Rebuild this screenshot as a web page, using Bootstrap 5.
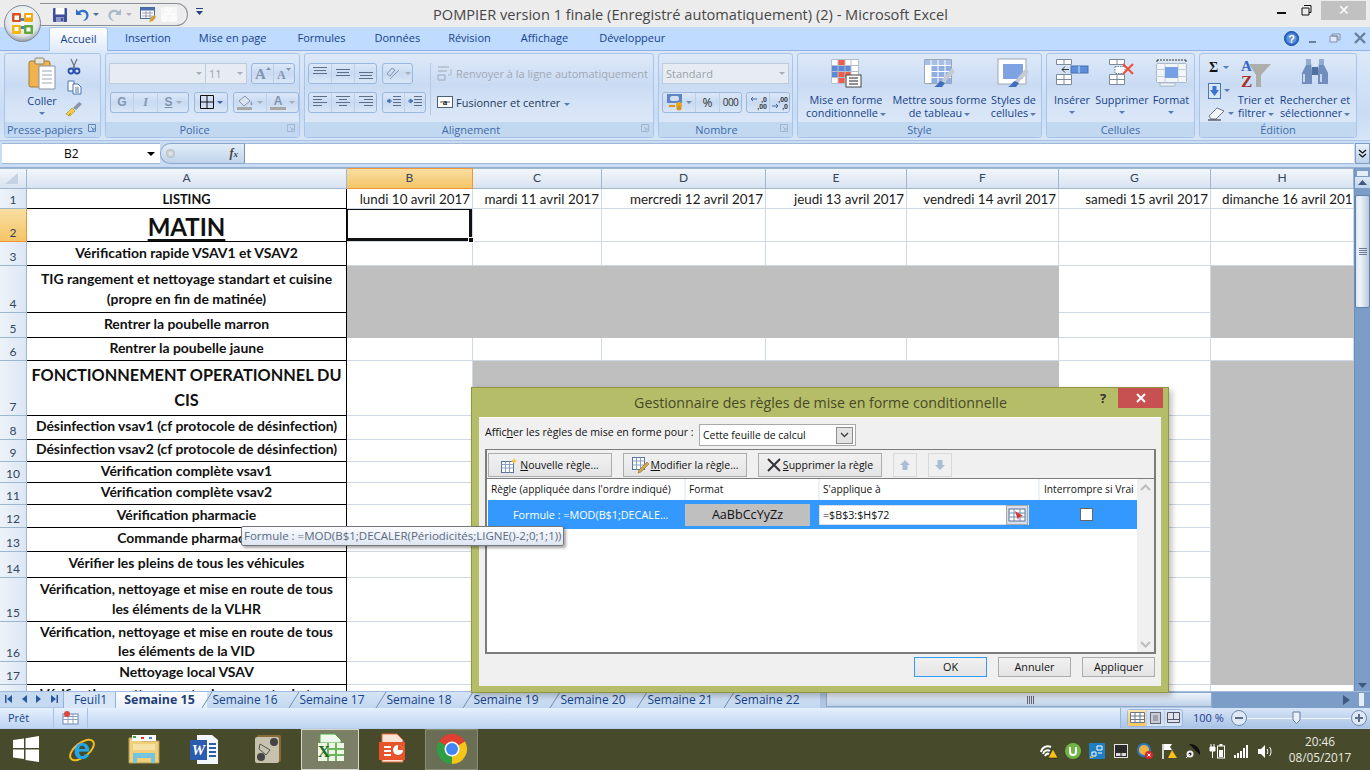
<!DOCTYPE html>
<html lang="fr">
<head>
<meta charset="utf-8">
<title>POMPIER version 1 finale - Microsoft Excel</title>
<link href="https://cdn.jsdelivr.net/npm/bootstrap@5.3.0/dist/css/bootstrap.min.css" rel="stylesheet">
<style>
html,body{height:770px;overflow:hidden;background:#fff}
body{font:11px "Open Sans",sans-serif;color:#15428b;line-height:13px}
svg{display:block;flex:none;overflow:visible}
.x-app{position:relative;width:1370px;height:770px;overflow:hidden}
/* title */
.x-title{height:27px;background:#ececec;position:relative}
.x-orbwrap{width:42px;flex:none;position:relative;z-index:3}
.x-orb{position:absolute;left:4px;top:5px}
.x-qat{height:23px;width:148px;margin-top:3px;margin-left:-2px;border:1px solid #8a8f98;border-left:0;border-radius:0 12px 12px 0;background:#ececec;padding-left:13px;gap:0}
.x-qm8{margin-left:8px}.x-qm4{margin-left:4px}.x-qm6{margin-left:7px}
.x-titletext{position:absolute;left:433px;top:5px;font-size:14.6px;line-height:18px;color:#474747;white-space:nowrap}
.x-winbtn{position:absolute;top:1px;height:19px}
.x-wmin{left:1276px}.x-wmax{left:1301px}
.x-wclose{left:1321px;width:45px;background:#c1c1c1;color:#fff;text-align:center;font-size:14px;line-height:18px}
/* tabs */
.x-tabbar{height:24px;background:#bfdbff;position:relative;padding-left:49px;border-bottom:1px solid #8db2e3}
.x-rtab{height:24px;color:#15428b;font-size:11px;line-height:22px;white-space:nowrap}
.x-rtab-on{background:linear-gradient(#fff,#dfeafa);border:1px solid #a3c3eb;border-bottom:0;border-radius:3px 3px 0 0;color:#15428b;width:59px;text-align:center;position:relative;margin-bottom:-1px;height:24px}
.x-tm17{margin-left:17px}.x-tm28{margin-left:28px}.x-tm29{margin-left:29px}.x-tm30{margin-left:30px}.x-tm31{margin-left:31px}
.x-winmini{gap:9px;padding-right:4px;height:23px}
.x-xgap{margin-left:4px}
/* ribbon */
.x-ribbon{height:90px;background:linear-gradient(#dbe8f9,#c9dcf5 70%,#d6e5f7);padding:2px 0 0 4px;border-bottom:1px solid #a9c3e6;gap:4px}
.x-grp{height:85px;border:1px solid #a8c4e8;border-radius:3px;background:linear-gradient(#dde9f8,#c9dbf3 38%,#d5e3f6 60%,#dfeafa);position:relative;display:flex;flex-direction:column}
.x-body{height:68px;flex:none;display:flex}
.x-bp3{padding-left:3px}.x-bt5{padding-top:3px}
.x-cap{height:15px;background:#c2d8f1;text-align:center;color:#3e6aaa;font-size:11px;line-height:15px;border-radius:0 0 3px 3px;position:relative}
.x-capl{text-align:left;padding-left:2px}.x-cap16{padding-right:16px}.x-cap18{padding-right:18px}
.x-launch{position:absolute;right:3px;top:2px;width:9px;height:9px}
.x-g1{width:97px}.x-g2{width:195px}.x-g3{width:350px}.x-g4{width:135px}.x-g5{width:245px}.x-g6{width:149px}.x-g7{width:158px}
.x-big{display:flex;flex-direction:column;align-items:center;text-align:center;white-space:nowrap;color:#15428b;font-size:10.85px;line-height:13px;flex:none}
.x-bigicon{height:36px;padding-top:2px;display:flex;justify-content:center;align-items:flex-start}
.x-pastew{width:58px;padding-left:16px}
.x-pasteicon{height:40px;padding-top:4px}
.x-m{height:9px;line-height:9px}
.x-st1w{width:93px;padding-top:3px;padding-left:3px}.x-st2w{width:95px;padding-top:3px;padding-left:2px}.x-st3w{width:55px;padding-top:3px}
.x-cw1{width:50px}.x-cw2{width:50px}.x-cw3{width:48px}
.x-ew1{width:34px;padding:7px 0 0 8px;gap:8px}.x-ew2{width:44px;padding-top:3px}.x-ew3{width:74px;padding-top:3px}
.x-sm1{height:14px;gap:5px;font:700 14px/14px 'Liberation Serif',serif;color:#111;padding-left:1px}
.x-sm2{height:16px;gap:3px}.x-sm3{height:14px;gap:2px}
.x-smc{width:22px;padding-top:5px;gap:6px}
.x-tri{display:inline-block;width:0;height:0;border:3px solid transparent;border-top:3px solid #567db1;border-bottom:0;vertical-align:middle;margin-left:2px}
.x-tri0{margin:0}.x-tridk{border-top-color:#3d62a8;margin:0}.x-trinum{border-top-color:#6e8db6;margin:0}
.x-col{display:flex;flex-direction:column}
.x-rows{display:flex;flex-direction:column;gap:8px;padding-top:9px}
.x-row{display:flex;height:21px;gap:5px}
.x-r0{gap:0}.x-r4{gap:4px}.x-r3t{gap:3px;color:#a0a8b3}.x-r3f{gap:3px;color:#1e395b}
.x-bg{display:flex;align-items:center;border:1px solid #9ab8de;border-radius:3px;background:linear-gradient(#dce8f8,#c8daf2 50%,#d9e6f7);height:21px;flex:none}
.x-b{height:100%;display:flex;align-items:center;justify-content:center;border-right:1px solid #bdd0e9;gap:3px;flex:none}
.x-b:last-child{border-right:0;flex:1}
.x-combo{height:21px;background:#e7ecf2;border:1px solid #bccbdd;color:#9aa3ad;display:flex;align-items:center;justify-content:space-between;padding:0 3px;font-size:11px;flex:none}
.x-tg{display:inline-block;width:0;height:0;border:3px solid transparent;border-top:3px solid #a5afba;border-bottom:0}
.w19{width:19px}.w18{width:18px}.w21{width:21px}.w22{width:22px}.w23{width:23px}.w24{width:24px}.w33{width:33px}.w31{width:31px}.w34{width:34px}.w42{width:42px}.w44{width:44px}.w56{width:56px}.w66{width:66px}.w69{width:69px}.w79{width:79px}.w80{width:80px}.w97{width:97px}.w127{width:127px}.w118{width:118px}
.x-fend{justify-content:flex-end}
.x-ml1n{margin-left:-1px}.x-ml1{margin-left:1px}.x-ml4{margin-left:4px}
.x-bi{color:#8296b0;font:700 12px 'Liberation Sans',sans-serif}
.x-bii{color:#8296b0;font:italic 700 12px 'Liberation Serif',serif}
.x-vsep{width:1px;height:52px;background:#b4c9e4;margin:9px 6px 0 4px;flex:none}
.x-rt{white-space:nowrap;font-size:11px;padding-top:1px}
.x-pct{color:#333;font-size:12px}.x-mil{color:#333;font-size:10px;letter-spacing:-.5px}
/* formula */
.x-fbar{height:27px;background:#c9dcf3;padding:2px 0 4px 2px;border-bottom:1px solid #93b0d2;position:relative}
.x-name{width:158px;height:21px;background:#fff;position:relative;font-size:12px;line-height:20px;color:#000;padding-left:62px;border-top:1px solid #9fb8d6;border-bottom:1px solid #9fb8d6}
.x-name i{position:absolute;right:5px;top:8px;border:4px solid transparent;border-top:4px solid #000;border-bottom:0}
.x-pill{width:85px;height:21px;border:1px solid #8aa7cc;border-right:1px solid #6f92bf;border-radius:10px 0 0 10px;background:linear-gradient(#e3edf9,#c0d3ea);position:relative;font:italic bold 12px "Liberation Serif",serif;color:#444;text-align:right;padding-right:6px;line-height:19px}
.x-pill b{position:absolute;left:5px;top:5px;width:9px;height:9px;border-radius:50%;background:radial-gradient(#eee,#9aa)}
.x-pill span{font-size:9px}
.x-input{flex:1;height:21px;background:#fff;border-top:1px solid #9fb8d6;border-bottom:1px solid #9fb8d6}
.x-expand{width:15px;height:21px;margin-left:1px;background:linear-gradient(#e8f0fb,#bdd1ea);border:1px solid #7d9cc4;display:flex;align-items:center;justify-content:center}
/* sheet */
.x-sheet{height:524px;position:relative;overflow:hidden;background:#fff}
.x-grid{border-collapse:separate;border-spacing:0;table-layout:fixed;width:1354px;font:13.95px Lato,sans-serif;color:#000;flex:none}
.x-grid td,.x-grid th{padding:0;border-right:1px solid #d0d7e5;border-bottom:1px solid #d0d7e5;overflow:hidden;white-space:nowrap;font-weight:400}
.x-grid thead th{height:21px;background:linear-gradient(#f2f6fb,#d8e3f1);border-color:#9eb6ce;border-top:1px solid #9eb6ce;text-align:center;color:#33465c;font-size:12px;line-height:18px}
.x-grid thead th.x-hon{background:linear-gradient(#f9dea2,#f4c566);border-color:#f29536}
.x-grid tbody th{background:linear-gradient(90deg,#eef3fa,#dce6f3);border-color:#9eb6ce;text-align:center;color:#33465c;font-size:12px;vertical-align:bottom;line-height:17px}
.x-grid tbody th.x-hon{background:linear-gradient(#f9dea2,#f4c566);border-color:#f29536}
.x-grid td.x-a{border-right:1px solid #000;border-bottom:1px solid #000;text-align:center;font-weight:700;white-space:nowrap;line-height:18px;color:#111;padding-bottom:2px}
.x-grid tr.x-hr2 td.x-a,.x-grid tr.x-hr3 td.x-a,.x-grid tr.x-hr4 td.x-a,.x-grid tr.x-hr7 td.x-a,.x-grid tr.x-hr15 td.x-a,.x-grid tr.x-hr16 td.x-a,.x-grid td.x-list{padding-bottom:0;line-height:20px}
.x-grid tr.x-hr16 td.x-a{line-height:19.5px}
.x-grid td.x-list{font-size:12.8px;line-height:18px;vertical-align:bottom}
.x-grid tr.x-hr18 td.x-a{padding-bottom:0}
.x-grid td.x-gray{background:#bfbfbf;border-color:#bfbfbf}
.x-grid td.x-d{text-align:right;padding-right:2px;font-size:13.4px;line-height:18px;color:#1a1a1a;vertical-align:bottom}
.x-grid td.x-dl{text-align:left;padding-left:11px}
.x-matin{font-size:24px;line-height:28px;text-decoration:underline;text-underline-offset:3px;display:block;padding-top:4px}
.x-fonc{font-size:16.3px;line-height:24.5px;display:block}
.x-grid td.x-active{position:relative;overflow:visible;box-shadow:inset -3px -3px 0 #111,inset 1px 1px 0 #111}
.x-handle{position:absolute;right:-2px;bottom:-2px;width:6px;height:6px;background:#111;border:1px solid #fff}
.x-hr1{height:20px}.x-hr2{height:33px}.x-hr3{height:24px}.x-hr4{height:47px}.x-hr5{height:25px}.x-hr6{height:23px}.x-hr7{height:55px}.x-hr8{height:24px}.x-hr9{height:22px}.x-hr10{height:21px}.x-hr11{height:22px}.x-hr12{height:23px}.x-hr13{height:24px}.x-hr14{height:26px}.x-hr15{height:44px}.x-hr16{height:40px}.x-hr17{height:23px}.x-hr18{height:24px}
.x-grid td.x-top{vertical-align:top}
.x-clip18{display:block;height:6px;overflow:hidden;margin-top:2px;line-height:14px}
.x-c0{width:27px}.x-cA{width:320px}.x-cB{width:126px}.x-cC{width:129px}.x-cD{width:164px}.x-cE{width:141px}.x-cF{width:152px}.x-cG{width:152px}.x-cH{width:143px}
.x-vscroll{width:16px;height:524px;background:#7c9dc8;border-left:1px solid #6d8fbc;flex:none}
.x-vsplit{height:7px;margin:2px 1px 0;background:#e4edf8;border:1px solid #7c9dc8}
.x-arrowb{height:11px;display:flex;align-items:center;justify-content:center;background:linear-gradient(#dfe9f6,#c0d3ea)}
.x-arrowd{margin-top:372px;background:#7c9dc8}
.x-thumb{height:113px;margin-top:7px;background:linear-gradient(90deg,#dde7f3,#f1f5fb 30%,#b9c9dd);border:1px solid #5f82ae;border-radius:2px;display:flex;align-items:center;justify-content:center}
/* bottom */
.x-sheettabs{height:17px;background:#afc6e3;position:relative;border-top:1px solid #a1bbdd;font-size:12px;color:#15428b;line-height:15px}
.x-nav{width:63px;padding-left:5px;gap:9px;display:flex;align-items:center;height:15px;background:#c5d9f1;flex:none}
.x-stab{height:16px;position:relative;text-align:center;background:linear-gradient(#d6e5f6,#c1d6ef);flex:none;white-space:nowrap}
.x-stab svg{position:absolute;left:-5px;top:0}
.x-st1{width:53px;border-left:1px solid #8db2e3;border-right:1px solid #8db2e3;background:#d8e6f6;padding-left:2px}
.x-st2{width:91px;font-weight:700;background:linear-gradient(#fff,#e8f0fb);color:#1f3f78;font-size:12.4px;padding-right:4px}
.x-stn{width:87px;padding-right:11px}
.x-stend{width:4px}
.x-hs{width:386px;height:15px;background:linear-gradient(#edf3fb,#bed0e6);margin-left:6px;border:1px solid #8fa9cb;flex:none;position:relative}
.x-hs i{position:absolute;left:200px;top:3px;width:8px;height:8px;background:repeating-linear-gradient(90deg,#667 0 1px,transparent 1px 2px)}
.x-ht{flex:1;height:16px;background:#7c9dc8;display:flex;align-items:center;gap:5px;padding-left:131px}
.x-hh{width:5px;height:13px;background:#e4edf8;margin-left:4px}
.x-status{height:21px;background:linear-gradient(#e5f0fd,#d3e3f8 45%,#bfd5f1);border-bottom:1px solid #b4cce9;color:#15428b;font-size:11px;line-height:19px;position:relative}
.x-sb{border-right:1px solid #a7c1e2;height:20px;flex:none}
.x-sb1{width:54px;padding-left:8px}
.x-view{margin-left:auto;width:250px;height:20px;background:linear-gradient(#d7e5f7,#a9c3e6);display:flex;align-items:center;padding-left:6px;border-left:1px solid #96b3d8;font-size:11px;color:#1f3a8c}
.x-bg18{height:18px}
.x-von{background:linear-gradient(#fbe6b1,#f8c760)}
.x-pct100{margin-left:10px;width:29px;white-space:nowrap}
.x-zm{margin-left:9px}
.x-task{height:41px;background:#474b2b;position:relative}
.x-win{width:52px;flex:none}
.x-tk{height:41px;display:flex;align-items:center;justify-content:center;flex:none}
.x-k60{width:60px}.x-k64{width:64px}.x-k58{width:58px}.x-k67{width:67px}.x-k66{width:66px}.x-k53{width:53px}
.x-tkon{background:#7b7f66;border:1px solid #d6d8cc}
.x-tk2{background:#6a6e55;border:1px solid #888b75}
.x-tray{margin-left:auto;padding-right:10px;height:41px;display:flex;align-items:center;color:#fff}
.x-ti{width:24px;display:flex;justify-content:center;flex:none;position:relative;top:2px}
.x-clock{width:80px;text-align:center;font-size:11.8px;line-height:16px;color:#e9e9e1;margin-left:3px}
/* dialog */
.x-dlg{position:absolute;z-index:2;left:471px;top:387px;width:698px;height:306px;background:#b5bd68;border:1px solid #90963f;box-shadow:3px 3px 6px rgba(0,0,0,.25);font-size:10.5px;color:#111;line-height:14px}
.x-dt{height:29px;text-align:center;font-size:14.2px;line-height:30px;color:#474a28;padding-left:1px}
.x-dq{position:absolute;left:628px;top:2px;font:700 13px/16px "Open Sans",sans-serif;color:#333}
.x-dx{position:absolute;left:646px;top:0;width:45px;height:20px;background:#c75050;display:flex;align-items:center;justify-content:center}
.x-dbody{margin:0 7px 0 7px;height:269px;background:#f0f0f0;border-top:1px solid #fff;padding:0 6px 0 6px}
.x-dtop{height:31px;display:flex;padding-top:6px}
.x-dlabel{width:214px;line-height:15px;flex:none;font-size:10.6px;padding-top:1px}
.x-dsel{width:157px;height:22px;background:#fff;border:1px solid #a9a9a9;padding:0 2px 0 3px;display:flex;align-items:center;justify-content:space-between;font-size:10.4px}
.x-dsel b{width:17px;height:17px;background:#e3e3e3;border:1px solid #8d8d8d;display:flex;align-items:center;justify-content:center}
.x-panel{height:205px;border:2px solid #7c7c7c;border-top-width:1px;background:#fff;width:671px}
.x-ptools{height:29px;background:#f0f0f0;border-bottom:1px solid #7c7c7c;padding:3px 0 0 1px;display:flex;gap:11px}
.x-dbtn{height:24px;width:124px;border:1px solid #acacac;background:linear-gradient(#f1f1f1,#e4e4e4);display:flex;align-items:center;justify-content:center;gap:2px;font-size:10.5px;white-space:nowrap;color:#111;padding:0}
.x-dis{width:24px;background:#f0f0f0;border-color:#d9d9d9}
.x-phead{height:21px;display:flex;align-items:center;padding-left:1px}
.x-phead div{height:21px;line-height:21px;padding-left:3px;border-right:2px solid #edf2f9;flex:none;font-size:10.2px;white-space:nowrap;overflow:hidden}
.x-c1{width:198px}.x-c2{width:134px}.x-c3{width:220px}.x-phead .x-c4{width:97px;border-right:0;padding-left:4px}
.x-prow{height:29px;width:649px;background:#3399ff;display:flex;align-items:center;margin-left:1px;color:#fff;position:relative}
.x-pf{padding-left:25px;white-space:nowrap;font-size:10.8px;width:197px;flex:none}
.x-pscroll{position:absolute;left:650px;top:0;width:17px;height:173px;background:#f0f0f0;padding:5px 0 4px}
.x-plist{position:relative}
.x-fmt{height:22px;background:#bfbfbf;width:125px;flex:none;color:#111;text-align:center;line-height:22px;font-size:12.6px}
.x-ref{width:210px;height:20px;margin-left:9px;background:#fff;border:1px solid #dde;color:#111;position:relative;display:flex;align-items:center;padding-left:3px;font-size:10.7px;flex:none}
.x-ref b{position:absolute;right:0;top:-1px;width:22px;height:20px;background:#d9dfe8;border:1px solid #a8a8a8;display:flex;align-items:center;justify-content:center}
.x-chk{width:13px;height:13px;background:#fff;border:1px solid #666;margin-left:51px;flex:none}
.x-dfoot{display:flex;justify-content:flex-end;gap:11px;padding-top:3px;width:670px}
.x-fbtn{width:73px;height:20px;border:1px solid #acacac;background:linear-gradient(#f1f1f1,#e4e4e4);text-align:center;line-height:18px;font-size:10.8px;color:#111}
.x-fok{border-color:#3399ff}
u{text-underline-offset:1px}
/* tooltip */
.x-tip{position:absolute;z-index:3;left:241px;top:526px;width:323px;height:20px;background:linear-gradient(#fbfcfe,#dfe6f3);border:1px solid #76767b;border-radius:2px;box-shadow:2px 2px 3px rgba(0,0,0,.35);color:#5a6a80;font-size:11.5px;line-height:18px;padding-left:2px;white-space:nowrap}
</style>
</head>
<body>
<div class="x-app d-flex flex-column">

<!-- title bar -->
<div class="x-title d-flex">
  <div class="x-orbwrap">
    <svg class="x-orb" width="37" height="37" viewBox="0 0 37 37">
      <defs><radialGradient id="og" cx=".5" cy=".35" r=".7"><stop offset="0" stop-color="#fff"/><stop offset=".7" stop-color="#dfe4ea"/><stop offset="1" stop-color="#7b8794"/></radialGradient></defs>
      <circle cx="18.5" cy="18.5" r="18" fill="url(#og)" stroke="#7f8b99"/>
      <rect x="8" y="8" width="9" height="9" rx="1" fill="#d9531e"/><rect x="10.5" y="10.5" width="4.5" height="4.5" fill="#fff"/>
      <rect x="20" y="8" width="9" height="9" rx="1" fill="#f3a712"/><rect x="22" y="10" width="5" height="2.5" fill="#fff"/>
      <rect x="8" y="20" width="9" height="9" rx="1" fill="#f2b705"/><rect x="10.5" y="22" width="4" height="4" fill="#fff"/>
      <rect x="20" y="20" width="9" height="9" rx="1" fill="#5fa83a"/><rect x="22.5" y="22.5" width="4" height="4" fill="#fff"/>
      <rect x="17" y="13" width="3" height="3" fill="#3a86c8"/><rect x="17" y="21" width="3" height="3" fill="#3a86c8"/>
    </svg>
  </div>
  <div class="x-qat d-flex align-items-center">
    <svg width="14" height="14" viewBox="0 0 14 14"><rect width="14" height="14" rx="1" fill="#3d4f9c"/><rect x="2.5" y="0" width="9" height="6.5" fill="#fff"/><rect x="3" y="9" width="8" height="5" fill="#8d98c9"/><rect x="8" y="10" width="2" height="3" fill="#3d4f9c"/></svg>
    <svg class="x-qm8" width="14" height="14" viewBox="0 0 14 14"><path d="M1 1v6h6L5 5c2-2 5-1 6 1s0 5-3 7c4-.5 6-3.500 5.500-6.500C13 2.500 7.500 0 3.500 3.500z" fill="#2f6fc6"/></svg>
    <svg class="x-qm4" width="7" height="4" viewBox="0 0 7 4"><path d="M0 0h6L3 3z" fill="#4a6a9c"/></svg>
    <svg class="x-qm8" width="14" height="14" viewBox="0 0 14 14"><path d="M13 1v6H7l2-2C7 3 4 4 3 6s0 5 3 7C2 12.500 0 9.500.5 6.500 1 2.500 6.500 0 10.500 3.500z" fill="#a9b8ca"/></svg>
    <svg class="x-qm4" width="7" height="4" viewBox="0 0 7 4"><path d="M0 0h6L3 3z" fill="#a9b3bf"/></svg>
    <svg class="x-qm6" width="17" height="16" viewBox="0 0 17 16"><rect x=".5" y=".5" width="14" height="11" fill="#fff" stroke="#47689a"/><rect x="1" y="1" width="13" height="2.500" fill="#4a6fb0"/><path d="M2 6h11M2 9h11M6 4v7M10 4v7" stroke="#88a" stroke-width=".8"/><path d="M9 15l2-5 4-2 1 2-3 4z" fill="#d2a13a"/></svg>
    <svg class="x-qm4" width="16" height="15" viewBox="0 0 16 15"><rect width="16" height="15" fill="#f7f7f7"/><path d="M6 1h4v3H6zM1 10h4v3H1zM11 10h4v3h-4zM8 4v3M3 10V7h10v3" fill="none" stroke="#fff"/></svg>
  </div>
  <svg class="ms-2 mt-2" width="7" height="8" viewBox="0 0 7 8"><path d="M0 0h7v1H0zM0 3h7L3.500 7z" fill="#27457c"/></svg>
  <div class="x-titletext">POMPIER version 1 finale (Enregistré automatiquement) (2) - Microsoft Excel</div>
  <svg class="x-winbtn x-wmin" width="12" height="19" viewBox="0 0 12 19"><rect x="1" y="11" width="9" height="2" fill="#111"/></svg>
  <svg class="x-winbtn x-wmax" width="12" height="19" viewBox="0 0 12 19"><path d="M3 4.500h7v7h-2M1 7h7v7H1z" fill="none" stroke="#111"/></svg>
  <div class="x-winbtn x-wclose">✕</div>
</div>

<!-- ribbon tabs -->
<div class="x-tabbar d-flex">
  <div class="x-rtab x-rtab-on">Accueil</div>
  <div class="x-rtab x-tm17">Insertion</div>
  <div class="x-rtab x-tm28">Mise en page</div>
  <div class="x-rtab x-tm31">Formules</div>
  <div class="x-rtab x-tm29">Données</div>
  <div class="x-rtab x-tm28">Révision</div>
  <div class="x-rtab x-tm30">Affichage</div>
  <div class="x-rtab x-tm31">Développeur</div>
  <div class="ms-auto d-flex align-items-center x-winmini">
    <svg width="15" height="15" viewBox="0 0 15 15"><circle cx="7.500" cy="7.500" r="7" fill="#2e6fd0" stroke="#17479a"/><circle cx="7.500" cy="7.500" r="5" fill="#fff" opacity=".25"/><text x="7.500" y="11.500" font-family="Liberation Sans" font-size="11" font-weight="700" text-anchor="middle" fill="#fff">?</text></svg>
    <svg width="12" height="12" viewBox="0 0 12 12"><rect x="1" y="9" width="7" height="2" fill="#6b7f9b"/></svg>
    <svg width="12" height="12" viewBox="0 0 12 12"><path d="M3 2h8v6H9V4H3zM1 4h7v6H1z" fill="#dfe8f4" stroke="#6b7f9b" stroke-width=".8"/></svg>
    <svg class="x-xgap" width="12" height="12" viewBox="0 0 12 12"><path d="M1 1l10 10M11 1L1 11" stroke="#6b7f9b" stroke-width="2.400"/></svg>
  </div>
</div>

<!-- ribbon -->
<div class="x-ribbon d-flex">
  <!-- Presse-papiers -->
  <div class="x-grp x-g1">
    <div class="x-body">
      <div class="x-big x-pastew">
        <div class="x-bigicon x-pasteicon">
          <svg width="28" height="32" viewBox="0 0 28 32"><rect x="1" y="3" width="21" height="26" rx="2" fill="#f0b24f" stroke="#a87a2f"/><rect x="7" y="0" width="9" height="6" rx="1" fill="#e6e6d8" stroke="#8b8468"/><path d="M11 8h16v23H11z" fill="#fff" stroke="#8793a8"/><path d="M14 13h10M14 17h10M14 21h10M14 25h10" stroke="#9aa6ba"/></svg>
        </div>
        <div>Coller</div>
        <div class="x-m"><span class="x-tri x-tri0"></span></div>
      </div>
      <div class="x-col align-items-center x-smc">
        <svg width="12" height="16" viewBox="0 0 12 16"><path d="M3 0l4 9M9 0L5 9" stroke="#6f7683" stroke-width="1.300"/><circle cx="3" cy="12" r="2.500" fill="none" stroke="#2a4fa8" stroke-width="1.800"/><circle cx="9" cy="12" r="2.500" fill="none" stroke="#2a4fa8" stroke-width="1.800"/></svg>
        <svg width="15" height="14" viewBox="0 0 15 14"><path d="M1 0h6v10H1z" fill="#fff" stroke="#4a74b4"/><path d="M6 3h5l3 3v7H6z" fill="#fff" stroke="#4a74b4"/><path d="M8 7h4M8 9h4M8 11h4" stroke="#4a74b4"/></svg>
        <svg width="18" height="16" viewBox="0 0 18 16"><path d="M1 13l6-6 3 3-5 5z" fill="#f4cd4a" stroke="#a3872a" stroke-width=".6"/><path d="M8 7l6-6 3 2-6 6z" fill="#8e93a8"/><path d="M3 15l3-3" stroke="#b98d1b"/></svg>
      </div>
    </div>
    <div class="x-cap x-capl">Presse-papiers<svg class="x-launch" viewBox="0 0 9 9"><path d="M.5.5h7v7h-7z M3 3l3 3M4 6h2V4" fill="none" stroke="#5f86bc"/></svg></div>
  </div>
  <!-- Police -->
  <div class="x-grp x-g2">
    <div class="x-body x-bp3">
      <div class="x-rows">
        <div class="x-row x-r0">
          <div class="x-combo w97 x-fend"><i class="x-tg"></i></div>
          <div class="x-combo w42 x-ml1n">11<i class="x-tg"></i></div>
          <div class="x-bg w44 x-ml4">
            <div class="x-b w22"><svg width="16" height="14" viewBox="0 0 16 14"><text x="0" y="13" font-family="Liberation Serif" font-size="15" font-weight="700" fill="#8296b0">A</text><path d="M11 4l2.500-3L16 4z" fill="#8296b0"/></svg></div>
            <div class="x-b w21"><svg width="14" height="13" viewBox="0 0 14 13"><text x="0" y="12" font-family="Liberation Serif" font-size="12" font-weight="700" fill="#8296b0">A</text><path d="M9 1h5l-2.500 3z" fill="#8296b0"/></svg></div>
          </div>
        </div>
        <div class="x-row">
          <div class="x-bg w79 x-ml1">
            <div class="x-b w23 x-bi">G</div>
            <div class="x-b w24 x-bii">I</div>
            <div class="x-b x-bi"><u>S</u><i class="x-tg"></i></div>
          </div>
          <div class="x-bg w34">
            <div class="x-b"><svg width="14" height="14" viewBox="0 0 14 14"><path d="M.5.5h13v13H.5zM7 .5v13M.5 7h13" fill="none" stroke="#111"/></svg><span class="x-tri x-tridk"></span></div>
          </div>
          <div class="x-bg w66">
            <div class="x-b w33"><svg width="17" height="15" viewBox="0 0 17 15"><path d="M2 6l6-5 5 5-6 5z" fill="#dbe4ee" stroke="#8296b0"/><path d="M14 6c1 2 2 3 1 4s-2-1-1-4z" fill="#8296b0"/><rect y="12" width="15" height="3" fill="#a7a7a7"/></svg><i class="x-tg"></i></div>
            <div class="x-b"><svg width="16" height="15" viewBox="0 0 16 15"><text x="8" y="10" text-anchor="middle" font-family="Liberation Sans" font-size="12" font-weight="700" fill="#8296b0">A</text><rect y="12" width="16" height="3" fill="#a7a7a7"/></svg><i class="x-tg"></i></div>
          </div>
        </div>
      </div>
    </div>
    <div class="x-cap x-cap16">Police<svg class="x-launch" viewBox="0 0 9 9"><path d="M.5.5h7v7h-7z M3 3l3 3M4 6h2V4" fill="none" stroke="#a5b6cc"/></svg></div>
  </div>
  <!-- Alignement -->
  <div class="x-grp x-g3">
    <div class="x-body x-bp3">
      <div class="x-rows w118">
        <div class="x-row">
          <div class="x-bg w69">
            <div class="x-b w23"><svg width="14" height="12" viewBox="0 0 14 12"><path d="M0 .5h14M1 3.500h12M0 6.500h14" stroke="#5d6e86"/></svg></div>
            <div class="x-b w23"><svg width="14" height="12" viewBox="0 0 14 12"><path d="M0 2.500h14M1 5.500h12M0 8.500h14" stroke="#5d6e86"/></svg></div>
            <div class="x-b"><svg width="14" height="12" viewBox="0 0 14 12"><path d="M0 5.500h14M1 8.500h12M0 11.500h14" stroke="#5d6e86"/></svg></div>
          </div>
          <div class="x-bg w31"><div class="x-b"><svg width="17" height="15" viewBox="0 0 17 15"><path d="M2 8l5-6 3 2-5 6zM5 13L14 4" fill="#d0dcec" stroke="#8296b0"/></svg><i class="x-tg"></i></div></div>
        </div>
        <div class="x-row">
          <div class="x-bg w69">
            <div class="x-b w23"><svg width="14" height="12" viewBox="0 0 14 12"><path d="M0 .5h14M0 3.500h9M0 6.500h14M0 9.500h9" stroke="#5d6e86"/></svg></div>
            <div class="x-b w23"><svg width="14" height="12" viewBox="0 0 14 12"><path d="M0 .5h14M3 3.500h8M0 6.500h14M3 9.500h8" stroke="#5d6e86"/></svg></div>
            <div class="x-b"><svg width="14" height="12" viewBox="0 0 14 12"><path d="M0 .5h14M5 3.500h9M0 6.500h14M5 9.500h9" stroke="#5d6e86"/></svg></div>
          </div>
          <div class="x-bg w44">
            <div class="x-b w22"><svg width="14" height="12" viewBox="0 0 14 12"><path d="M6 .5h8M6 3.500h8M6 6.500h8M6 9.500h8" stroke="#5d6e86"/><path d="M0 5h5M0 5l3-2v4z" stroke="#4a74b4" fill="#4a74b4"/></svg></div>
            <div class="x-b"><svg width="14" height="12" viewBox="0 0 14 12"><path d="M6 .5h8M6 3.500h8M6 6.500h8M6 9.500h8" stroke="#5d6e86"/><path d="M0 5h5M5 5l-3-2v4z" stroke="#4a74b4" fill="#4a74b4"/></svg></div>
          </div>
        </div>
      </div>
      <div class="x-vsep"></div>
      <div class="x-rows">
        <div class="x-row align-items-center x-r3t"><svg width="16" height="15" viewBox="0 0 16 15"><path d="M1 1h11M1 5h9M1 9h7v5H1z" fill="none" stroke="#a0a8b3"/><path d="M14 3v6h-3" fill="none" stroke="#b0b8c2"/></svg><span class="x-rt">Renvoyer à la ligne automatiquement</span></div>
        <div class="x-row align-items-center x-r3f"><svg width="16" height="12" viewBox="0 0 16 12"><rect x=".5" y=".5" width="15" height="11" fill="#fff" stroke="#4f5f74"/><path d="M3 6h10" stroke="#4f5f74"/><text x="8" y="9" font-family="Liberation Serif" font-size="9" font-weight="700" text-anchor="middle" fill="#222">a</text></svg><span class="x-rt">Fusionner et centrer<span class="x-tri ms-1"></span></span></div>
      </div>
    </div>
    <div class="x-cap x-cap16">Alignement<svg class="x-launch" viewBox="0 0 9 9"><path d="M.5.5h7v7h-7z M3 3l3 3M4 6h2V4" fill="none" stroke="#a5b6cc"/></svg></div>
  </div>
  <!-- Nombre -->
  <div class="x-grp x-g4">
    <div class="x-body x-bp3">
      <div class="x-rows">
        <div class="x-row"><div class="x-combo w127">Standard<i class="x-tg"></i></div></div>
        <div class="x-row x-r4">
          <div class="x-bg w80">
            <div class="x-b w33"><svg width="16" height="16" viewBox="0 0 16 16"><rect width="15" height="9" fill="#5f85c4"/><rect x="3" y="2" width="9" height="5" rx="2" fill="#d4e0f2"/><circle cx="12" cy="11" r="3" fill="#e7a91c"/><circle cx="12" cy="14" r="2.500" fill="#d6951b"/><path d="M2 12h6" stroke="#d6951b" stroke-width="2"/></svg><span class="x-tri x-trinum"></span></div>
            <div class="x-b w24 x-pct">%</div>
            <div class="x-b x-mil">000</div>
          </div>
          <div class="x-bg w44">
            <div class="x-b w23"><svg width="17" height="15" viewBox="0 0 17 15"><path d="M1 4h6M1 4l2-2M1 4l2 2" stroke="#3e6aaa" fill="none"/><text x="17" y="7" text-anchor="end" font-size="7" font-weight="700" font-family="Liberation Sans" fill="#333">,0</text><text x="17" y="14" text-anchor="end" font-size="7" font-weight="700" font-family="Liberation Sans" fill="#333">,00</text></svg></div>
            <div class="x-b"><svg width="17" height="15" viewBox="0 0 17 15"><path d="M1 11h6M7 11l-2-2M7 11l-2 2" stroke="#3e6aaa" fill="none"/><text x="17" y="7" text-anchor="end" font-size="7" font-weight="700" font-family="Liberation Sans" fill="#333">,00</text><text x="17" y="14" text-anchor="end" font-size="7" font-weight="700" font-family="Liberation Sans" fill="#333">,0</text></svg></div>
          </div>
        </div>
      </div>
    </div>
    <div class="x-cap x-cap18">Nombre<svg class="x-launch" viewBox="0 0 9 9"><path d="M.5.5h7v7h-7z M3 3l3 3M4 6h2V4" fill="none" stroke="#a5b6cc"/></svg></div>
  </div>
  <!-- Style -->
  <div class="x-grp x-g5">
    <div class="x-body">
      <div class="x-big x-st1w">
        <div class="x-bigicon"><svg width="31" height="29" viewBox="0 0 31 29"><rect x="0" y="0" width="27" height="25" fill="#fff"/><rect x="7" y="0" width="7" height="25" fill="#f05b4a"/><rect x="0" y="7" width="20" height="11" fill="#5f87d8"/><rect x="7" y="13" width="13" height="5" fill="#f05b4a"/><path d="M.5.500h27v24H.5zM7 0v25M14 0v25M20 0v25M0 6.500h27M0 12.500h27M0 18.500h27" fill="none" stroke="#b5bfcb"/><rect x="15" y="16" width="15" height="12" fill="#fff" stroke="#444"/><path d="M18 19h9M18 22h9M18 25h9" stroke="#222"/></svg></div>
        <div>Mise en forme</div><div>conditionnelle<span class="x-tri"></span></div>
      </div>
      <div class="x-big x-st2w">
        <div class="x-bigicon"><svg width="31" height="29" viewBox="0 0 31 29"><rect x="0" y="0" width="28" height="25" fill="#fff"/><rect x="0" y="0" width="28" height="7" fill="#a9c0e6"/><rect x="7" y="7" width="21" height="18" fill="#8faee2"/><path d="M.5.500h27v24H.5zM7 0v25M14 0v25M21 0v25M0 6.500h27M0 12.500h27M0 18.500h27" fill="none" stroke="#fff"/><path d="M.5.500h27v24H.5z" fill="none" stroke="#9aa6b4"/><path d="M28 9L17 22l3 2 11-11z" fill="#c3cad4"/><path d="M17 22c-3 1-3 4-7 6h8l3-4z" fill="#3e6fc0"/></svg></div>
        <div>Mettre sous forme</div><div>de tableau<span class="x-tri"></span></div>
      </div>
      <div class="x-big x-st3w">
        <div class="x-bigicon"><svg width="31" height="29" viewBox="0 0 31 29"><rect x="0" y="0" width="28" height="25" fill="#fff" stroke="#9aa6b4"/><rect x="5" y="5" width="20" height="15" fill="#7fa3e2"/><path d="M28 9L17 22l3 2 11-11z" fill="#c3cad4"/><path d="M17 22c-3 1-3 4-7 6h8l3-4z" fill="#3e6fc0"/></svg></div>
        <div>Styles de</div><div>cellules<span class="x-tri"></span></div>
      </div>
    </div>
    <div class="x-cap">Style</div>
  </div>
  <!-- Cellules -->
  <div class="x-grp x-g6">
    <div class="x-body x-bt5">
      <div class="x-big x-cw1">
        <div class="x-bigicon"><svg width="32" height="27" viewBox="0 0 32 27"><path d="M.5.500h15v5H.5zM8 0v5.500M.5 15.500h15v10H.5zM8 15v11M0 20.500h15" fill="#fff" stroke="#7b8a9d"/><rect x="15" y="7" width="17" height="7" fill="#5c8fdb" stroke="#476fae"/><path d="M23 7v7" stroke="#dbe7f8"/><path d="M13 10.500H6M6 10.500l3-3M6 10.500l3 3" stroke="#333" fill="none"/></svg></div>
        <div>Insérer</div><div class="x-m"><span class="x-tri x-tri0"></span></div>
      </div>
      <div class="x-big x-cw2">
        <div class="x-bigicon"><svg width="26" height="27" viewBox="0 0 26 27"><path d="M.5.500h15v5H.5zM8 0v5.500M.5 15.500h15v10H.5zM8 15v11M0 20.500h15" fill="#fff" stroke="#7b8a9d"/><path d="M6 7.500h10v7H6z" fill="#fff" stroke="#6f86a9" stroke-dasharray="1.500 1"/><path d="M14 5l10 10M24 5L14 15" stroke="#f2503a" stroke-width="2"/></svg></div>
        <div>Supprimer</div><div class="x-m"><span class="x-tri x-tri0"></span></div>
      </div>
      <div class="x-big x-cw3">
        <div class="x-bigicon"><svg width="31" height="29" viewBox="0 0 31 29"><path d="M1 1h29M1 1v3M30 1v3" stroke="#333" stroke-dasharray="2 1"/><rect x=".5" y="4.500" width="30" height="19" rx="1" fill="#f2f6fb" stroke="#a9b6c7"/><path d="M9 4v20M22 4v20M0 10.500h31M0 17.500h31" stroke="#c3cdd9"/><rect x="9" y="8" width="13" height="11" fill="#76a0e6"/><path d="M4 24h15v3H4z" fill="#f2f6fb" stroke="#a9b6c7"/></svg></div>
        <div>Format</div><div class="x-m"><span class="x-tri x-tri0"></span></div>
      </div>
    </div>
    <div class="x-cap">Cellules</div>
  </div>
  <!-- Édition -->
  <div class="x-grp x-g7">
    <div class="x-body">
      <div class="x-col x-ew1">
        <div class="d-flex align-items-center x-sm1">Σ<span class="x-tri x-tri0"></span></div>
        <div class="d-flex align-items-center x-sm2"><svg width="13" height="16" viewBox="0 0 13 16"><rect x=".5" y=".5" width="12" height="15" fill="#dbe8fa" stroke="#4a74b4"/><path d="M4.500 3h4v4h2.500l-4.500 6-4.500-6h2.500z" fill="#3b74cf"/></svg><span class="x-tri x-tri0"></span></div>
        <div class="d-flex align-items-center x-sm3"><svg width="18" height="14" viewBox="0 0 18 14"><path d="M1 9l8-8 7 3-8 8H3z" fill="#f6f6f6" stroke="#6c7686"/><path d="M0 13h13" stroke="#222"/></svg><span class="x-tri x-tri0"></span></div>
      </div>
      <div class="x-big x-ew2">
        <div class="x-bigicon"><svg width="30" height="29" viewBox="0 0 30 29"><text x="0" y="12" font-family="Liberation Serif" font-size="15" font-weight="700" fill="#3467c4">A</text><text x="0" y="28" font-family="Liberation Serif" font-size="17" font-weight="700" fill="#a5342a">Z</text><path d="M8 5h22L20 16v12h-5V16z" fill="#a8a9a2" opacity=".9"/></svg></div>
        <div>Trier et</div><div>filtrer<span class="x-tri"></span></div>
      </div>
      <div class="x-big x-ew3">
        <div class="x-bigicon"><svg width="28" height="26" viewBox="0 0 28 26"><path d="M2 12l4-8h4l1 8v13H1V14z" fill="#6f8ebd"/><path d="M26 12l-4-8h-4l-1 8v13h10V14z" fill="#6f8ebd"/><rect x="11" y="8" width="6" height="8" fill="#4f6f9f"/><rect x="5" y="0" width="5" height="6" fill="#94abd0"/><rect x="18" y="0" width="5" height="6" fill="#94abd0"/><rect x="2" y="15" width="2" height="8" fill="#c7d5ea"/><rect x="19" y="15" width="2" height="8" fill="#c7d5ea"/></svg></div>
        <div>Rechercher et</div><div>sélectionner<span class="x-tri"></span></div>
      </div>
    </div>
    <div class="x-cap">Édition</div>
  </div>
</div>

<!-- formula bar -->
<div class="x-fbar d-flex">
  <div class="x-name">B2<i></i></div>
  <div class="x-pill"><b></b>f<span>x</span></div>
  <div class="x-input"></div>
  <div class="x-expand"><svg width="9" height="9" viewBox="0 0 9 9"><path d="M1 1l3.500 3L8 1M1 5l3.500 3L8 5" fill="none" stroke="#111" stroke-width="1.300"/></svg></div>
</div>

<!-- sheet -->
<div class="x-sheet d-flex">
  <table class="x-grid">
    <colgroup><col class="x-c0"><col class="x-cA"><col class="x-cB"><col class="x-cC"><col class="x-cD"><col class="x-cE"><col class="x-cF"><col class="x-cG"><col class="x-cH"></colgroup>
    <thead><tr>
      <th><svg width="24" height="18" viewBox="0 0 24 18"><path d="M18 4v11H5z" fill="#c4d2e4"/></svg></th><th>A</th><th class="x-hon">B</th><th>C</th><th>D</th><th>E</th><th>F</th><th>G</th><th>H</th>
    </tr></thead>
    <tbody>
      <tr class="x-hr1"><th>1</th><td class="x-a x-list">LISTING</td><td class="x-d">lundi 10 avril 2017</td><td class="x-d">mardi 11 avril 2017</td><td class="x-d">mercredi 12 avril 2017</td><td class="x-d">jeudi 13 avril 2017</td><td class="x-d">vendredi 14 avril 2017</td><td class="x-d">samedi 15 avril 2017</td><td class="x-d x-dl">dimanche 16 avril 2017</td></tr>
      <tr class="x-hr2"><th class="x-hon">2</th><td class="x-a"><span class="x-matin">MATIN</span></td><td class="x-active"><span class="x-handle"></span></td><td></td><td></td><td></td><td></td><td></td><td></td></tr>
      <tr class="x-hr3"><th>3</th><td class="x-a">Vérification rapide VSAV1 et VSAV2</td><td></td><td></td><td></td><td></td><td></td><td></td><td></td></tr>
      <tr class="x-hr4"><th>4</th><td class="x-a">TIG rangement et nettoyage standart et cuisine<br>(propre en fin de matinée)</td><td class="x-gray"></td><td class="x-gray"></td><td class="x-gray"></td><td class="x-gray"></td><td class="x-gray"></td><td></td><td class="x-gray"></td></tr>
      <tr class="x-hr5"><th>5</th><td class="x-a">Rentrer la poubelle marron</td><td class="x-gray"></td><td class="x-gray"></td><td class="x-gray"></td><td class="x-gray"></td><td class="x-gray"></td><td></td><td class="x-gray"></td></tr>
      <tr class="x-hr6"><th>6</th><td class="x-a">Rentrer la poubelle jaune</td><td></td><td></td><td></td><td></td><td></td><td></td><td></td></tr>
      <tr class="x-hr7"><th>7</th><td class="x-a"><span class="x-fonc">FONCTIONNEMENT OPERATIONNEL DU<br>CIS</span></td><td></td><td class="x-gray"></td><td class="x-gray"></td><td class="x-gray"></td><td class="x-gray"></td><td></td><td class="x-gray"></td></tr>
      <tr class="x-hr8"><th>8</th><td class="x-a">Désinfection vsav1 (cf protocole de désinfection)</td><td></td><td class="x-gray"></td><td class="x-gray"></td><td class="x-gray"></td><td class="x-gray"></td><td></td><td class="x-gray"></td></tr>
      <tr class="x-hr9"><th>9</th><td class="x-a">Désinfection vsav2 (cf protocole de désinfection)</td><td></td><td class="x-gray"></td><td class="x-gray"></td><td class="x-gray"></td><td class="x-gray"></td><td></td><td class="x-gray"></td></tr>
      <tr class="x-hr10"><th>10</th><td class="x-a">Vérification complète vsav1</td><td></td><td class="x-gray"></td><td class="x-gray"></td><td class="x-gray"></td><td class="x-gray"></td><td></td><td class="x-gray"></td></tr>
      <tr class="x-hr11"><th>11</th><td class="x-a">Vérification complète vsav2</td><td></td><td class="x-gray"></td><td class="x-gray"></td><td class="x-gray"></td><td class="x-gray"></td><td></td><td class="x-gray"></td></tr>
      <tr class="x-hr12"><th>12</th><td class="x-a">Vérification pharmacie</td><td></td><td class="x-gray"></td><td class="x-gray"></td><td class="x-gray"></td><td class="x-gray"></td><td></td><td class="x-gray"></td></tr>
      <tr class="x-hr13"><th>13</th><td class="x-a">Commande pharmacie</td><td></td><td class="x-gray"></td><td class="x-gray"></td><td class="x-gray"></td><td class="x-gray"></td><td></td><td class="x-gray"></td></tr>
      <tr class="x-hr14"><th>14</th><td class="x-a">Vérifier les pleins de tous les véhicules</td><td></td><td class="x-gray"></td><td class="x-gray"></td><td class="x-gray"></td><td class="x-gray"></td><td></td><td class="x-gray"></td></tr>
      <tr class="x-hr15"><th>15</th><td class="x-a">Vérification, nettoyage et mise en route de tous<br>les éléments de la VLHR</td><td></td><td class="x-gray"></td><td class="x-gray"></td><td class="x-gray"></td><td class="x-gray"></td><td></td><td class="x-gray"></td></tr>
      <tr class="x-hr16"><th>16</th><td class="x-a">Vérification, nettoyage et mise en route de tous<br>les éléments de la VID</td><td></td><td class="x-gray"></td><td class="x-gray"></td><td class="x-gray"></td><td class="x-gray"></td><td></td><td class="x-gray"></td></tr>
      <tr class="x-hr17"><th>17</th><td class="x-a">Nettoyage local VSAV</td><td></td><td class="x-gray"></td><td class="x-gray"></td><td class="x-gray"></td><td class="x-gray"></td><td></td><td class="x-gray"></td></tr>
      <tr class="x-hr18"><th></th><td class="x-a x-top"><span class="x-clip18">Vérification, nettoyage et mise en route de tous</span></td><td></td><td></td><td></td><td></td><td></td><td></td><td></td></tr>
    </tbody>
  </table>
  <div class="x-vscroll">
    <div class="x-vsplit"></div>
    <div class="x-arrowb"><svg width="9" height="5" viewBox="0 0 9 5"><path d="M0 5l4.500-5L9 5z" fill="#3f5a7e"/></svg></div>
    <div class="x-thumb"><svg width="8" height="7" viewBox="0 0 8 7"><path d="M0 .5h8M0 2.500h8M0 4.500h8M0 6.500h8" stroke="#6b7c92"/></svg></div>
    <div class="x-arrowb x-arrowd"><svg width="9" height="5" viewBox="0 0 9 5"><path d="M0 0l4.500 5L9 0z" fill="#3f5a7e"/></svg></div>
  </div>
</div>

<!-- sheet tabs -->
<div class="x-sheettabs d-flex">
  <div class="x-nav">
    <svg width="7" height="8" viewBox="0 0 7 8"><path d="M0 0h1.500v8H0zM7 0v8L2 4z" fill="#27579c"/></svg>
    <svg width="6" height="8" viewBox="0 0 6 8"><path d="M6 0v8L1 4z" fill="#27579c"/></svg>
    <svg width="6" height="8" viewBox="0 0 6 8"><path d="M0 0v8l5-4z" fill="#27579c"/></svg>
    <svg width="7" height="8" viewBox="0 0 7 8"><path d="M0 0v8l5-4zM5.500 0H7v8H5.500z" fill="#27579c"/></svg>
  </div>
  <div class="x-stab x-st1">Feuil1</div>
  <div class="x-stab x-st2">Semaine 15</div>
  <div class="x-stab x-stn"><svg width="10" height="16" viewBox="0 0 10 16"><path d="M0 16L10 0" stroke="#6f8fb9"/></svg>Semaine 16</div>
  <div class="x-stab x-stn"><svg width="10" height="16" viewBox="0 0 10 16"><path d="M0 16L10 0" stroke="#6f8fb9"/></svg>Semaine 17</div>
  <div class="x-stab x-stn"><svg width="10" height="16" viewBox="0 0 10 16"><path d="M0 16L10 0" stroke="#6f8fb9"/></svg>Semaine 18</div>
  <div class="x-stab x-stn"><svg width="10" height="16" viewBox="0 0 10 16"><path d="M0 16L10 0" stroke="#6f8fb9"/></svg>Semaine 19</div>
  <div class="x-stab x-stn"><svg width="10" height="16" viewBox="0 0 10 16"><path d="M0 16L10 0" stroke="#6f8fb9"/></svg>Semaine 20</div>
  <div class="x-stab x-stn"><svg width="10" height="16" viewBox="0 0 10 16"><path d="M0 16L10 0" stroke="#6f8fb9"/></svg>Semaine 21</div>
  <div class="x-stab x-stn"><svg width="10" height="16" viewBox="0 0 10 16"><path d="M0 16L10 0" stroke="#6f8fb9"/></svg>Semaine 22</div>
  <div class="x-stab x-stend"></div>
  <div class="x-hs"><i></i></div>
  <div class="x-ht"><svg width="7" height="10" viewBox="0 0 7 10"><path d="M0 0l7 5-7 5z" fill="#3f5a7e"/></svg><div class="x-hh"></div></div>
</div>

<!-- status -->
<div class="x-status d-flex">
  <div class="x-sb x-sb1">Prêt</div>
  <div class="x-sb w34 d-flex align-items-center justify-content-center"><svg width="15" height="13" viewBox="0 0 15 13"><rect y="3" width="15" height="10" fill="#fff" stroke="#6e88ae"/><path d="M0 5.500h15M0 8.500h15M5 3v10M10 3v10" stroke="#8ba2c4"/><circle cx="4" cy="3" r="3" fill="#e0453a"/></svg></div>
  <div class="x-view">
    <div class="x-bg w56 x-bg18">
      <div class="x-b w19 x-von"><svg width="15" height="11" viewBox="0 0 15 11"><path d="M.5.500h14v10H.5zM5 0v11M10 0v11M0 4h15M0 7.500h15" fill="#fff" stroke="#6b7686"/></svg></div>
      <div class="x-b w18"><svg width="11" height="12" viewBox="0 0 11 12"><rect x=".5" y=".5" width="10" height="11" fill="#c9ced6" stroke="#667"/><path d="M3 4h5M3 6h5M3 8h5" stroke="#778"/></svg></div>
      <div class="x-b"><svg width="13" height="11" viewBox="0 0 13 11"><path d="M.5.500h12v10H.5zM6.500 0v7M0 7.500h13" fill="#dfe4ec" stroke="#556"/></svg></div>
    </div>
    <div class="x-pct100">100 %</div>
    <svg class="x-zm" width="16" height="16" viewBox="0 0 16 16"><circle cx="8" cy="8" r="7.500" fill="#dfe9f6" stroke="#6d8aaf"/><rect x="4" y="7" width="8" height="2" fill="#5a6e8a"/></svg>
    <svg width="104" height="14" viewBox="0 0 104 14"><path d="M0 7.500h104" stroke="#f5f9fe"/><path d="M46 1h7v8l-3.500 3.500L46 9z" fill="#e9f0f9" stroke="#5e7ba3"/></svg>
    <svg width="16" height="16" viewBox="0 0 16 16"><circle cx="8" cy="8" r="7.500" fill="#dfe9f6" stroke="#6d8aaf"/><path d="M4 7h3V4h2v3h3v2H9v3H7V9H4z" fill="#5a6e8a"/></svg>
  </div>
</div>

<!-- taskbar -->
<div class="x-task d-flex">
  <div class="d-flex align-items-center justify-content-center x-win">
    <svg width="26" height="26" viewBox="0 0 26 26"><path d="M0 4l11-1.500V12H0zM12.500 2.300L26 0v12H12.500zM0 13.500h11V23L0 21.500zM12.500 13.500H26V26l-13.500-2z" fill="#fff"/></svg>
  </div>
  <div class="x-tk x-k60"><svg width="30" height="32" viewBox="0 0 30 32"><ellipse cx="15" cy="17" rx="14" ry="7" fill="none" stroke="#f2bd1f" stroke-width="2" transform="rotate(-38 15 17)"/><text x="15" y="26" font-family="Liberation Sans" font-size="30" font-weight="700" text-anchor="middle" fill="#22a7e8">e</text></svg></div>
  <div class="x-tk x-k64"><svg width="32" height="30" viewBox="0 0 32 30"><path d="M1 4h10l3 3h17v22H1z" fill="#f0cf7c" stroke="#b89a4d"/><path d="M4 1h24v6H4z" fill="#fff"/><rect x="5" y="2" width="3" height="2" fill="#3da43a"/><rect x="13" y="3" width="3" height="2" fill="#d33"/><rect x="21" y="3" width="3" height="2" fill="#3a86d8"/><path d="M5 10h22v6H5z" fill="#f7e2a6"/><path d="M5 19h22v10h-4v-5H9v5H5z" fill="#74c3e0"/></svg></div>
  <div class="x-tk x-k58"><svg width="32" height="32" viewBox="0 0 32 32"><path d="M8 2h15l6 5v24H8z" fill="#f3f6fb"/><rect x="1" y="7" width="17" height="20" fill="#2c5cae"/><text x="9.500" y="22" font-family="Liberation Serif" font-size="15" font-style="italic" font-weight="700" text-anchor="middle" fill="#fff">W</text><path d="M20 11h7M20 15h7M20 19h7M20 23h7" stroke="#2c5cae" stroke-width="2"/></svg></div>
  <div class="x-tk x-k67"><svg width="28" height="30" viewBox="0 0 28 30"><rect x="3" y="1" width="24" height="27" rx="2" fill="#8b6a34"/><rect x="1" y="3" width="24" height="26" rx="2" fill="#c7c2ae"/><circle cx="20" cy="8" r="4" fill="#444"/><circle cx="7" cy="23" r="4" fill="#444"/><path d="M6 10l10 6-4 5-7-6z" fill="none" stroke="#555"/></svg></div>
  <div class="x-tk x-k58 x-tkon"><svg width="32" height="32" viewBox="0 0 32 32"><path d="M6 1h15l6 6v3H6z" fill="#eff6ea" stroke="#4da63f"/><rect x="4" y="10" width="26" height="18" fill="#eef5e7"/><path d="M14 10v18M22 10v18M14 16h16M14 22h16" stroke="#6fb45b" stroke-width="2"/><text x="10" y="24" font-family="Liberation Serif" font-size="17" font-weight="700" text-anchor="middle" fill="#1f6a25">X</text></svg></div>
  <div class="x-tk x-k66"><svg width="32" height="32" viewBox="0 0 32 32"><path d="M6 1h15l6 6v22H6z" fill="#f7e3d8" stroke="#e8663a"/><rect x="3" y="9" width="26" height="18" fill="#e8542a"/><path d="M8 13h7v2H8zM8 17h7v2H8zM8 21h7v2H8z" fill="#fff"/><circle cx="22" cy="17" r="5" fill="#fff"/><path d="M22 17V12a5 5 0 0 1 5 5z" fill="#e8542a"/></svg></div>
  <div class="x-tk x-k53 x-tk2"><svg width="32" height="32" viewBox="0 0 32 32"><path d="M16 16L3 8.500A15 15 0 0 1 29 8.500z" fill="#e0402f"/><path d="M16 16L29 8.500A15 15 0 0 1 16 31z" fill="#f5c518"/><path d="M16 16V31A15 15 0 0 1 3 8.500z" fill="#2f9e44"/><circle cx="16" cy="16" r="7.500" fill="#fff"/><circle cx="16" cy="16" r="6" fill="#4285f4"/></svg></div>
  <div class="x-tray">
    <div class="x-ti"><svg width="18" height="16" viewBox="0 0 18 16"><path d="M1 9c1-5 6-7 10-5M3 11c1-3 4-5 7-3M5 13c1-2 2-3 4-2" fill="none" stroke="#fff" stroke-width="2"/><path d="M13 6l5 9H8z" fill="#f6c11b" stroke="#111" stroke-width=".5"/></svg></div>
    <div class="x-ti"><svg width="16" height="16" viewBox="0 0 16 16"><circle cx="8" cy="8" r="8" fill="#6fb545"/><path d="M4 4h2v5a2 2 0 0 0 4 0V4h2v5a4 4 0 0 1-8 0z" fill="#fff"/></svg></div>
    <div class="x-ti"><svg width="16" height="16" viewBox="0 0 16 16"><rect width="16" height="16" rx="1" fill="#1f7fc2"/><path d="M8 3h5v4H8zM3 9h4v4H3zM9 10h4" fill="none" stroke="#fff"/><path d="M1 13l4 2H1z" fill="#e8b93a"/></svg></div>
    <div class="x-ti"><svg width="14" height="14" viewBox="0 0 14 14"><rect x=".5" y=".5" width="13" height="13" fill="#2a2a2a" stroke="#e5e5e5"/><rect x="2" y="9" width="10" height="3" fill="#d9d9d9"/><path d="M7 9v3" stroke="#222"/></svg></div>
    <div class="x-ti"><svg width="16" height="16" viewBox="0 0 16 16"><circle cx="7" cy="7" r="6" fill="#f4b33d" stroke="#2b78c4" stroke-width="2"/><circle cx="12" cy="12" r="4" fill="#d6272b"/><path d="M10.500 10.500l3 3M13.500 10.500l-3 3" stroke="#fff"/></svg></div>
    <div class="x-ti"><svg width="16" height="16" viewBox="0 0 16 16"><path d="M2 1v15" stroke="#fff" stroke-width="1.500"/><path d="M3 1h8l-2 3 2 3H3z" fill="#fff"/><path d="M11 7l5 8H7z" fill="#f6c11b"/></svg></div>
    <div class="x-ti"><svg width="16" height="16" viewBox="0 0 16 16"><path d="M4 1a10 10 0 0 1 11 11z" fill="#111"/><circle cx="5" cy="11" r="3.500" fill="#eee"/><circle cx="5" cy="11" r="1.500" fill="#222"/><path d="M1 15l4-4" stroke="#fff"/></svg></div>
    <div class="x-ti"><svg width="16" height="16" viewBox="0 0 16 16"><path d="M2 1v3M5 1v3M1 4h5v4H1zM3.500 8v7" stroke="#fff" fill="#fff"/><rect x="8.500" y="3" width="7" height="12" fill="none" stroke="#fff"/><rect x="10" y="7" width="4" height="7" fill="#fff"/><rect x="10.500" y="1" width="3" height="2" fill="#fff"/></svg></div>
    <div class="x-ti"><svg width="15" height="13" viewBox="0 0 15 13"><rect y="10" width="2" height="3" fill="#fff"/><rect x="3" y="8" width="2" height="5" fill="#fff"/><rect x="6" y="6" width="2" height="7" fill="#fff"/><rect x="9" y="3" width="2" height="10" fill="#fff"/><rect x="12" y="0" width="2" height="13" fill="#fff"/></svg></div>
    <div class="x-ti"><svg width="15" height="13" viewBox="0 0 15 13"><path d="M0 4h3l4-4v13L3 9H0z" fill="#fff"/><path d="M9 4c1 1 1 4 0 5M11.500 2c2 2 2 7 0 9" fill="none" stroke="#fff"/></svg></div>
    <div class="x-clock">20:46<br>08/05/2017</div>
  </div>
</div>

<!-- tooltip -->
<div class="x-tip">Formule : =MOD(B$1;DECALER(Périodicités;LIGNE()-2;0;1;1))</div>

<!-- dialog -->
<div class="x-dlg">
  <div class="x-dt">Gestionnaire des règles de mise en forme conditionnelle</div>
  <div class="x-dq">?</div>
  <div class="x-dx"><svg width="10" height="10" viewBox="0 0 10 10"><path d="M1 1l8 8M9 1L1 9" stroke="#fff" stroke-width="2"/></svg></div>
  <div class="x-dbody">
    <div class="x-dtop">
      <div class="x-dlabel">Affic<u>h</u>er les règles de mise en forme pour :</div>
      <div class="x-dsel">Cette feuille de calcul<b><svg width="9" height="6" viewBox="0 0 9 6"><path d="M1 1l3.500 3.500L8 1" fill="none" stroke="#444" stroke-width="1.500"/></svg></b></div>
    </div>
    <div class="x-panel">
      <div class="x-ptools">
        <button type="button" class="x-dbtn"><svg width="17" height="15" viewBox="0 0 17 15"><rect x=".5" y="3.500" width="12" height="11" fill="#fff" stroke="#57729c"/><path d="M.5 6.500h12M.5 10h12M4.500 3.500v11M8.500 3.500v11" stroke="#8aa0c0"/><path d="M13 0l1 2 2 1-2 1-1 2-1-2-2-1 2-1z" fill="#f6c93a"/></svg><span><u>N</u>ouvelle règle...</span></button>
        <button type="button" class="x-dbtn"><svg width="17" height="16" viewBox="0 0 17 16"><rect x=".5" y=".5" width="12" height="12" fill="#fff" stroke="#57729c"/><path d="M.5 4h12M.5 8h12M4.500 .5v12M8.500 .5v12" stroke="#8aa0c0"/><path d="M15 5L7 13l-1 3 3-1 8-8z" fill="#d6a64a" stroke="#7b5c1c" stroke-width=".5"/></svg><span><u>M</u>odifier la règle...</span></button>
        <button type="button" class="x-dbtn"><svg width="14" height="14" viewBox="0 0 14 14"><path d="M1 1l12 12M13 1L1 13" stroke="#333" stroke-width="2"/></svg><span><u>S</u>upprimer la règle</span></button>
        <button type="button" class="x-dbtn x-dis"><svg width="10" height="10" viewBox="0 0 10 10"><path d="M5 0l5 5H7.500v5h-5V5H0z" fill="#a9bdd6"/></svg></button>
        <button type="button" class="x-dbtn x-dis"><svg width="10" height="10" viewBox="0 0 10 10"><path d="M5 10l5-5H7.500V0h-5v5H0z" fill="#a9bdd6"/></svg></button>
      </div>
      <div class="x-plist">
        <div class="x-phead">
          <div class="x-c1">Règle (appliquée dans l'ordre indiqué)</div>
          <div class="x-c2">Format</div>
          <div class="x-c3">S'applique à</div>
          <div class="x-c4">Interrompre si Vrai</div>
        </div>
        <div class="x-prow">
          <div class="x-pf">Formule : =MOD(B$1;DECALE...</div>
          <div class="x-fmt">AaBbCcYyZz</div>
          <div class="x-ref">=$B$3:$H$72<b><svg width="16" height="12" viewBox="0 0 16 12"><rect width="16" height="12" fill="#fff" stroke="#57729c"/><path d="M0 4h16M0 8h16M5 0v12M11 0v12" stroke="#6f8fb9"/><path d="M6 2l8 5-4 1-1 3z" fill="#d9352a"/></svg></b></div>
          <div class="x-chk"></div>
        </div>
        <div class="x-pscroll d-flex flex-column justify-content-between align-items-center">
          <svg width="11" height="7" viewBox="0 0 11 7"><path d="M1 6l4.500-4.500L10 6" fill="none" stroke="#bdbdbd" stroke-width="2"/></svg>
          <svg width="11" height="7" viewBox="0 0 11 7"><path d="M1 1l4.500 4.500L10 1" fill="none" stroke="#bdbdbd" stroke-width="2"/></svg>
        </div>
      </div>
    </div>
    <div class="x-dfoot">
      <div class="x-fbtn x-fok">OK</div>
      <div class="x-fbtn">Annuler</div>
      <div class="x-fbtn">Appliquer</div>
    </div>
  </div>
</div>

</div>
</body>
</html>
